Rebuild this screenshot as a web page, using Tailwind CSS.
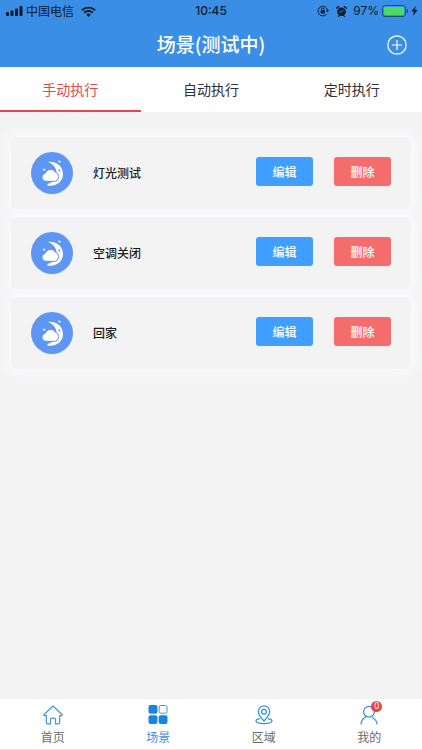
<!DOCTYPE html>
<html lang="zh-CN">
<head>
<meta charset="utf-8">
<meta name="viewport" content="width=device-width, initial-scale=1">
<title>场景</title>
<script src="https://cdn.jsdelivr.net/npm/@tailwindcss/browser@4"></script>
</head>
<body class="flex min-h-screen flex-col bg-[#f3f3f3] font-['Noto_Sans_CJK_SC',sans-serif] text-[#303133]">
<svg class="hidden" aria-hidden="true">
  <symbol id="night" viewBox="0 0 42 42">
    <circle cx="21" cy="21" r="21" fill="#5e96f4"/>
    <path d="M17 9.800C25 9 32 14 32 21.800C32 30 25 35 16.200 33.400C16.200 32.200 17.300 31.500 19 31C24 29.500 26 25 25.500 20C25 15.500 22 12 17 9.800Z" fill="#fff"/>
    <path d="M14.800 29.300a4 4 0 0 1-.7-7.900 5.700 5.700 0 0 1 10.300-1.300 4.900 4.900 0 0 1 .1 9.200Z" fill="#fff" stroke="#5e96f4" stroke-width="1"/>
    <circle cx="13" cy="17.600" r="1.200" fill="#dce8ff"/><circle cx="28.500" cy="9.600" r="1.200" fill="#dce8ff"/><circle cx="28.300" cy="18.600" r="1" fill="#5e96f4"/>
  </symbol>
</svg>
<header class="flex h-[67px] flex-col bg-[#3a8ee6]">
  <div class="grid h-[22px] grid-cols-[1fr_auto_1fr] items-center px-[6px] text-xs leading-none text-[#0b1c30]">
    <div class="flex items-center">
      <svg class="h-[10px] w-[17px]" viewBox="0 0 17 10" fill="currentColor" aria-hidden="true"><rect y="6" width="3" height="4" rx=".8"/><rect x="4.500" y="4.500" width="3" height="5.500" rx=".8"/><rect x="9" y="2.500" width="3" height="7.500" rx=".8"/><rect x="13.500" width="3" height="10" rx=".8"/></svg>
      <span class="ml-[3px]">中国电信</span>
      <svg class="ml-[7px] h-[11px] w-[15px]" viewBox="0 0 15 11" fill="none" stroke="currentColor" stroke-width="1.900" aria-hidden="true"><path d="M.8 4.300a9.600 9.600 0 0 1 13.400 0M3.200 6.800a6.200 6.200 0 0 1 8.600 0"/><path d="M5.300 8.600a3.200 3.200 0 0 1 4.400 0L7.500 10.900Z" fill="currentColor" stroke="none"/></svg>
    </div>
    <time class="font-[Inter,sans-serif] font-medium">10:45</time>
    <div class="-mr-[2px] flex items-center justify-end">
      <svg class="h-3 w-3" viewBox="0 0 12 12" fill="none" stroke="currentColor" aria-hidden="true"><path d="M9.500 9.200A4.800 4.800 0 1 1 10.600 5.500"/><path d="m8.800 5.300 1.800 2 1.400-2Z" fill="currentColor" stroke="none"/><path d="M4.500 5.500V4.300a1.300 1.300 0 0 1 2.600 0v1.200" stroke-width=".9"/><rect x="3.700" y="5.300" width="4.200" height="3.200" rx=".4" fill="currentColor" stroke="none"/></svg>
      <svg class="ml-[7px] h-[11px] w-[11px]" viewBox="0 0 11 11" fill="currentColor" aria-hidden="true"><circle cx="5.500" cy="5.700" r="4.300"/><path d="M.5 3.300A2 2 0 0 1 3.600.8ZM10.500 3.300A2 2 0 0 0 7.400.8ZM1.500 10.700l1.800-2 .8.700-1.500 1.500ZM9.500 10.700l-1.800-2-.8.700 1.500 1.500Z"/><path d="M5.500 6 7.600 3.700M5.700 6H3.300" stroke="#3a8ee6" stroke-width=".9"/></svg>
      <span class="ml-[6px] font-[Inter,sans-serif]">97%</span>
      <svg class="ml-[3px] h-3 w-[26px]" viewBox="0 0 26 12" aria-hidden="true"><rect x=".5" y=".5" width="23" height="11" rx="2.500" fill="none" stroke="#1d5289"/><rect x="2" y="2" width="20" height="8" rx="1" fill="#4cd964"/><path d="M24.500 4a2 2 0 0 1 0 4Z" fill="#1d5289"/></svg>
      <svg class="ml-[3px] h-[10px] w-[7px]" viewBox="0 0 7 10" fill="currentColor" aria-hidden="true"><path d="M4.700 0 .4 5.600h2.500L2 10l4.600-6H4Z"/></svg>
    </div>
  </div>
  <div class="grid flex-1 grid-cols-[1fr_auto_1fr] items-center px-[15px]">
    <h1 class="col-start-2 pb-[3px] text-[19px] leading-none font-medium text-white">场景(测试中)</h1>
    <button type="button" aria-label="添加" class="justify-self-end text-white"><svg class="size-5" viewBox="0 0 20 20" fill="none" stroke="currentColor" stroke-width="1.200" aria-hidden="true"><circle cx="10" cy="10" r="9.200"/><path d="M10 5v10M5 10h10"/></svg></button>
  </div>
</header>
<nav aria-label="执行方式" class="grid h-[45px] grid-cols-3 bg-white text-sm">
  <button type="button" class="border-b-2 border-[#e4484c] text-[#e4484c]">手动执行</button>
  <button type="button" class="border-b-2 border-transparent">自动执行</button>
  <button type="button" class="border-b-2 border-transparent">定时执行</button>
</nav>
<main class="flex-1 px-[11px] pt-[25px]">
  <ul class="flex flex-col gap-2 text-xs font-medium">
    <li class="flex h-[72px] items-center rounded-md bg-[#f3f3f3] px-5 shadow-[0_0_12px_5px_#f9fafd]">
      <svg class="size-[42px]" aria-hidden="true"><use href="#night"/></svg>
      <h2 class="ml-5 flex-1 text-[#1c1c1e]">灯光测试</h2>
      <div class="flex gap-[21px] pb-[3px] text-white">
        <button type="button" class="h-[29px] w-[57px] rounded-[3px] bg-[#409eff]">编辑</button>
        <button type="button" class="h-[29px] w-[57px] rounded-[3px] bg-[#f56c6c]">删除</button>
      </div>
    </li>
    <li class="flex h-[72px] items-center rounded-md bg-[#f3f3f3] px-5 shadow-[0_0_12px_5px_#f9fafd]">
      <svg class="size-[42px]" aria-hidden="true"><use href="#night"/></svg>
      <h2 class="ml-5 flex-1 text-[#1c1c1e]">空调关闭</h2>
      <div class="flex gap-[21px] pb-[3px] text-white">
        <button type="button" class="h-[29px] w-[57px] rounded-[3px] bg-[#409eff]">编辑</button>
        <button type="button" class="h-[29px] w-[57px] rounded-[3px] bg-[#f56c6c]">删除</button>
      </div>
    </li>
    <li class="flex h-[72px] items-center rounded-md bg-[#f3f3f3] px-5 shadow-[0_0_12px_5px_#f9fafd]">
      <svg class="size-[42px]" aria-hidden="true"><use href="#night"/></svg>
      <h2 class="ml-5 flex-1 text-[#1c1c1e]">回家</h2>
      <div class="flex gap-[21px] pb-[3px] text-white">
        <button type="button" class="h-[29px] w-[57px] rounded-[3px] bg-[#409eff]">编辑</button>
        <button type="button" class="h-[29px] w-[57px] rounded-[3px] bg-[#f56c6c]">删除</button>
      </div>
    </li>
  </ul>
</main>
<nav aria-label="主导航" class="sticky bottom-0 grid h-[51px] grid-cols-4 border-b border-[#e4e4e4] bg-white text-xs leading-4 text-[#6b6b6b]">
  <a href="#home" class="flex flex-col items-center gap-1 pt-[6px]">
    <svg class="size-5" viewBox="0 0 20 20" fill="none" stroke="#3d9ad8" stroke-width="1.200" stroke-linejoin="round" aria-hidden="true"><path d="M10 1 .9 9.800q-.3.900.7.900H3.300V17.600q0 1.300 1.300 1.300H7.500V14.500q0-1.300 1.300-1.300h2.400q1.300 0 1.300 1.300v4.400h2.900q1.300 0 1.300-1.300V10.700h1.700q1 0 .7-.9Z"/></svg>
    <span>首页</span>
  </a>
  <a href="#scene" aria-current="page" class="flex flex-col items-center gap-1 pt-[6px] text-[#3a8ee6]">
    <svg class="size-5" viewBox="0 0 20 20" fill="#1687e0" aria-hidden="true"><rect x=".5" y="0" width="9" height="8.700" rx="2"/><rect x="11.200" y=".5" width="7.800" height="7.700" rx="1.500" fill="none" stroke="#3d9ad8"/><rect x=".5" y="10.300" width="9" height="8.700" rx="2"/><rect x="10.700" y="10.300" width="8.800" height="8.700" rx="2"/></svg>
    <span>场景</span>
  </a>
  <a href="#area" class="flex flex-col items-center gap-1 pt-[6px]">
    <svg class="size-5" viewBox="0 0 20 20" fill="none" stroke="#2f91d6" stroke-width="1.200" aria-hidden="true"><path d="M10 16C6.500 12.500 4.300 9.800 4.300 6.600a5.700 5.700 0 0 1 11.400 0C15.700 9.800 13.500 12.500 10 16Z"/><circle cx="10" cy="6.800" r="2.400"/><path d="M6 13.600C3.500 14 2 14.700 2 15.800c0 1.600 3.500 2.800 8 2.800s8-1.200 8-2.800c0-1.100-1.500-1.800-4-2.200"/></svg>
    <span>区域</span>
  </a>
  <a href="#mine" class="flex flex-col items-center gap-1 pt-[6px]">
    <span class="relative">
      <svg class="size-5" viewBox="0 0 20 20" fill="none" stroke="#2f91d6" stroke-width="1.200" stroke-linecap="round" aria-hidden="true"><circle cx="10" cy="6.700" r="5.400"/><path d="M2 19c.3-3 2-5.600 4.600-7M13.400 12.800c2.600 1.200 4.300 3.200 4.600 6.200"/></svg>
      <span class="absolute -top-1 -right-[3px] flex size-[11px] items-center justify-center rounded-full bg-[#f2403e] font-[Roboto,sans-serif] text-[9px] leading-none text-white">0</span>
    </span>
    <span>我的</span>
  </a>
</nav>
</body>
</html>
